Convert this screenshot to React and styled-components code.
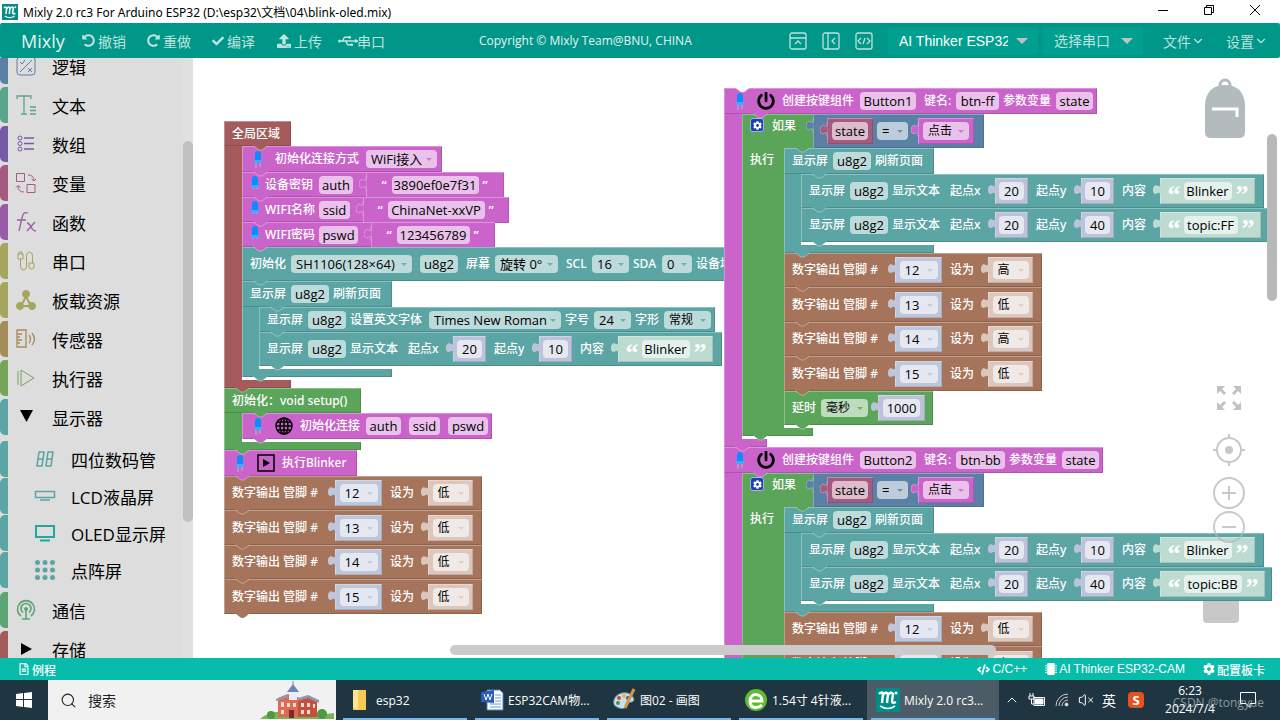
import React from "react";
import styled, { createGlobalStyle } from "styled-components";
import {
  FaCheck,
  FaCog,
  FaMicrochip,
  FaPowerOff,
  FaRedoAlt,
  FaRegFileAlt,
  FaUndoAlt,
  FaUpload,
  FaCode,
} from "react-icons/fa";
import { ChevronDown, ChevronUp, Search, Usb, VolumeX } from "lucide-react";

const MAGENTA = "#ca64ca";
const TEAL = "#5ba5a5";
const BROWN = "#a5745b";
const GREEN = "#5ba55b";
const RED = "#a55b5b";
const BLUE = "#5b80a5";
const ROSE = "#a55b80";
const NUMBER = "#bdc2db";
const PIN = "#bdc6db";
const LEVEL = "#dbc7bd";
const TEXT = "#bddbd1";

const menuItems = [
  { name: "逻辑", color: BLUE, icon: "logic" },
  { name: "文本", color: "#5ba58c", icon: "text" },
  { name: "数组", color: "#745ba5", icon: "list" },
  { name: "变量", color: ROSE, icon: "variable" },
  { name: "函数", color: "#995ba5", icon: "func" },
  { name: "串口", color: "#a5a55b", icon: "serial" },
  { name: "板载资源", color: "#a5a55b", icon: "board" },
  { name: "传感器", color: "#a58c5b", icon: "sensor" },
  { name: "执行器", color: "#74a55b", icon: "actuator" },
  {
    name: "显示器",
    color: TEAL,
    icon: "open",
    items: [
      { name: "四位数码管", color: TEAL, icon: "digits" },
      { name: "LCD液晶屏", color: TEAL, icon: "lcd" },
      { name: "OLED显示屏", color: TEAL, icon: "oled" },
      { name: "点阵屏", color: TEAL, icon: "matrix" },
    ],
  },
  { name: "通信", color: "#5ba574", icon: "radio" },
  { name: "存储", color: RED, icon: "closed" },
];

const tasks = [
  { name: "esp32", icon: "folder" },
  { name: "ESP32CAM物...", icon: "word" },
  { name: "图02 - 画图", icon: "paint" },
  { name: "1.54寸 4针液...", icon: "browser" },
  { name: "Mixly 2.0 rc3...", icon: "mixly", active: true },
];

const MenuIcon = ({ name, color }) => {
  const shapes = {
    logic: (
      <>
        <rect x="1" y="1" width="18" height="18" rx="3" />
        <path d="M4 16 16 4M4 6l2 2 3-4M12 12l4 4M16 12l-4 4" />
      </>
    ),
    text: <path d="M1 4V1h14v3M8 1v18M5 19h6M14 12h6M14 15.500h6M14 19h6" strokeWidth="1.300" />,
    list: (
      <>
        <circle cx="4" cy="4" r="2" />
        <circle cx="4" cy="9.500" r="2" />
        <circle cx="4" cy="15" r="2" />
        <path d="M8 4h10M8 9.500h10M8 15h10" strokeWidth="1.600" />
      </>
    ),
    variable: (
      <path d="M.5.5h8v8h-8zM11 11.500h8v8h-8zM12 2q6 0 6 6M15.500 6l2.500 2 2-2M8 19q-6 0-6-6M0 14.500l2-2 2.500 2" />
    ),
    func: <path d="M12 1Q7-1 6 6L3 19M1 8h9M11 11q2 0 4 4t5 4M19 10 11 19" strokeWidth="1.300" />,
    serial: (
      <path d="M2 3h5v5h-5zM3 3V1h3v2M4.500 8v7q0 4 3 4t3-4V5q0-4 3-4t3 4v7M13 12h5v4q0 2-2.500 2T13 16z" />
    ),
    board: (
      <g fill={color}>
        <circle cx="10" cy="4" r="3.500" />
        <circle cx="4" cy="16" r="3.500" />
        <circle cx="16" cy="16" r="3.500" />
        <path d="M10 4Q9 11 4 16h12Q11 11 10 4" fill="none" strokeWidth="2" />
      </g>
    ),
    sensor: (
      <path d="M1 1h9v17H1zM1 5h5M1 8h3M1 11h5M1 14h3M13 6q3 4 0 8M16 4q5 6 0 12" strokeWidth="1.300" />
    ),
    actuator: <path d="M2 3v14M5 2v16l13-8z" />,
    open: <path d="M4 3h13l-6.500 12z" fill="#000" stroke="none" />,
    closed: <path d="M5 4v12l11-6z" fill="#000" stroke="none" />,
    digits: (
      <>
        <path d="M4 3h5l-2 14H2z" strokeWidth="1.600" strokeLinejoin="round" />
        <path d="M13 3h5l-2 14h-5z" strokeWidth="1.600" strokeLinejoin="round" />
        <path d="M3 10h5M12 10h5" strokeWidth="1.600" />
      </>
    ),
    lcd: (
      <path d="M.5 5.500h19v6H.5zM5 14h10" strokeWidth="1.500" />
    ),
    oled: (
      <path d="M1 3h18v11H1zM5 17.500h10" stroke="#26a5a0" strokeWidth="2" />
    ),
    matrix: (
      <g fill={color} stroke="none">
        {[2.500, 10, 17.500].map((x) =>
          [2.500, 10, 17.500].map((y) => <circle key={`${x}-${y}`} cx={x} cy={y} r="2.500" />)
        )}
      </g>
    ),
    radio: (
      <>
        <path d="M5 16a8.500 8.500 0 1 1 10 0M7 12.500a5 5 0 1 1 6 0M10 9v10M6 19h8" strokeWidth="1.600" />
        <circle cx="10" cy="9" r="1.500" fill={color} />
      </>
    ),
  };

  return (
    <svg width="20" height="20" viewBox="0 0 20 20" fill="none" stroke={color} overflow="visible">
      {shapes[name]}
    </svg>
  );
};

const MixlyLogo = ({ size }) => (
  <svg width={size} height={size} viewBox="0 0 24 24">
    <path d="M0 0h24v24H0z" fill="#008d86" />
    <path
      d="M3 6q3-3 4 0l-1 9M7 7q3-4 5-1l-1 9M12 7q3-4 5-1l-1 7q0 3 4 1"
      fill="none"
      stroke="#fff"
      strokeWidth="2.400"
    />
    <path d="M4 18q8 5 15 0" fill="none" stroke="#fff" strokeWidth="1.600" />
    <circle cx="20" cy="5" r="1.500" fill="#fff" />
  </svg>
);

const TaskIcon = ({ name }) => {
  if (name === "mixly") return <MixlyLogo size={24} />;

  const shapes = {
    folder: (
      <>
        <path d="M5 2h13v20H5z" fill="#f6cb55" />
        <path d="M5 2h5v20l-5-3z" fill="#ffe596" />
      </>
    ),
    word: (
      <>
        <path d="M7 2h13l3 3v17H7z" fill="#fff" stroke="#4a7cc7" />
        <path d="M15 7h6M15 10h6M15 13h6M10 16h11M10 19h11" stroke="#6f98d6" />
        <path d="M1 4 14 2v13L1 14z" fill="#2b5eb2" />
        <path d="m4 6 2 6 2-6 2 6 2-6" fill="none" stroke="#fff" />
      </>
    ),
    paint: (
      <>
        <path d="M2 12C4 4 17 2 21 9s-6 4-6 7-3 6-8 4-6-4-5-8z" fill="#cbe0ee" stroke="#5c87a5" />
        <circle cx="7" cy="10" r="2" fill="#d9463d" />
        <circle cx="12" cy="8" r="2" fill="#efb825" />
        <circle cx="6" cy="15" r="2" fill="#3e9b45" />
        <circle cx="16" cy="10" r="2" fill="#2766b1" />
        <path d="m22 1-9 19" stroke="#d69445" strokeWidth="3" />
      </>
    ),
    browser: (
      <>
        <circle cx="12" cy="12" r="11" fill="#5fbc32" />
        <path d="M6 13h12c0-8-12-9-12 0s9 7 12 4" fill="none" stroke="#fff" strokeWidth="3" />
      </>
    ),
  };
  return (
    <svg width="24" height="24" viewBox="0 0 24 24">
      {shapes[name]}
    </svg>
  );
};

const Led = ({ narrow }) => (
  <LedBox $narrow={narrow}>
    <svg width="10" height={narrow ? 13 : 17} viewBox={narrow ? "0 0 10 13" : "0 0 10 17"}>
      <path d="M3 11v6M7 11v5" stroke="#b5b5d5" />
      <path d="M2 10V4q0-4 3-4t3 4v6z" fill="#0a8bff" />
      <path d="M1 9h8v3H1z" fill="#45a8f5" />
    </svg>
  </LedBox>
);

const Globe = () => (
  <BlockIcon width="18" height="18" viewBox="0 0 18 18" fill="none" stroke="#000" strokeWidth="1.500">
    <circle cx="9" cy="9" r="8" />
    <ellipse cx="9" cy="9" rx="4" ry="8" />
    <path d="M9 1v16M1 9h16M2 5h14M2 13h14" />
  </BlockIcon>
);

const PlayBox = () => (
  <BlockIcon width="18" height="18" viewBox="0 0 18 18">
    <path d="M1 1h16v16H1z" fill="none" stroke="#000" strokeWidth="1.500" />
    <path d="M6 5v8l7-4z" />
  </BlockIcon>
);

const Notch = ({ color, left = 11 }) => (
  <NotchSvg $left={left} width="15" height="6" viewBox="0 0 15 6">
    <path d="M0 0h15v1h-1L9 5H6L1 1H0z" fill={color} />
    <path d="M1 1.500 6 5h3l5-3.500" fill="none" stroke="#fff" strokeOpacity="0.35" />
  </NotchSvg>
);

const Value = ({ color, width, flat, near, children }) => (
  <ValueBox $color={color} $width={width} $near={near}>
    <Puzzle width="8" height="15" viewBox="0 0 8 15">
      <path
        d="M8 1v13H7V11Q5 10 3 12 0 12 0 8T3 3Q5 5 7 4V1z"
        fill={color}
        stroke="#fff"
        strokeOpacity={flat ? 0.3 : 0.1}
      />
    </Puzzle>
    {children}
  </ValueBox>
);

const Input = ({ label, width, value, sep }) => (
  <FieldInput aria-label={label} $width={width} $sep={sep} defaultValue={value} />
);

const Dropdown = ({ label, width, value, color, sep, small }) => (
  <DropdownBox $width={width} $color={color} $sep={sep}>
    <FieldSelect aria-label={label} defaultValue={value} $small={small}>
      <option>{value}</option>
    </FieldSelect>
  </DropdownBox>
);

const CBlock = ({ color, head, arm, armLabel, foot, children }) => (
  <div>
    {head}
    <Body>
      <Arm $color={color} $width={arm}>
        {armLabel}
      </Arm>
      <div>{children}</div>
    </Body>
    <Foot $color={color} $width={foot}>
      <Notch color={color} />
    </Foot>
  </div>
);

const Row = ({ color, height = 25, end = 4, notchLeft, children }) => (
  <RowBox $color={color} $height={height} $end={end}>
    {children}
    <Notch color={color} left={notchLeft} />
  </RowBox>
);

const PinRow = ({ pin, level, index }) => (
  <Row color={BROWN} height={index % 2 ? 35 : 34} end={9}>
    <Label $width={90}>数字输出 管脚 #</Label>
    <Value color={PIN} width={47}>
      <Dropdown label="管脚" width={38} value={pin} color={PIN} />
    </Value>
    <Label $width={25} $sep>
      设为
    </Label>
    <Value color={LEVEL} width={45}>
      <Dropdown label="电平" width={36} value={level} color={LEVEL} small />
    </Value>
  </Row>
);

const StringRow = ({ label, name, nameWidth, value, valueWidth, width }) => (
  <Row color={MAGENTA} end={0}>
    <Led narrow />
    <Label $width={50}>{label}</Label>
    <Input label={label} width={nameWidth} value={name} />
    <Value color={MAGENTA} width={width} flat>
      <SmallQuote>“</SmallQuote>
      <Input label={`${label}值`} width={valueWidth} value={value} />
      <SmallQuote>”</SmallQuote>
    </Value>
  </Row>
);

const TextRow = ({ x, y, text, textWidth, end = 9 }) => (
  <Row color={TEAL} height={34} end={end}>
    <Label $width={37}>显示屏</Label>
    <Input label="显示屏" width={38} value="u8g2" />
    <Label $width={50}>显示文本</Label>
    <Label $width={32} $sep>
      起点x
    </Label>
    <Value color={NUMBER} width={33}>
      <Input label="起点x" width={25} value={x} />
    </Value>
    <Label $width={32} $sep>
      起点y
    </Label>
    <Value color={NUMBER} width={33}>
      <Input label="起点y" width={25} value={y} />
    </Value>
    <Label $width={25} $sep>
      内容
    </Label>
    <Value color={TEXT} width={textWidth + 47}>
      <BigQuote>“</BigQuote>
      <Input label="内容" width={textWidth} value={text} />
      <BigQuote>”</BigQuote>
    </Value>
  </Row>
);

const RefreshBlock = ({ children }) => (
  <CBlock
    color={TEAL}
    arm={17}
    foot={150}
    head={
      <Row color={TEAL} height={26} end={8} notchLeft={28}>
        <Label $width={37}>显示屏</Label>
        <Input label="显示屏" width={38} value="u8g2" />
        <Label $width={51}>刷新页面</Label>
      </Row>
    }
  >
    {children}
  </CBlock>
);

const ButtonBlock = ({ name, id, idWidth, topic, topicWidth, levels }) => (
  <CBlock
    color={MAGENTA}
    arm={18}
    foot={43}
    head={
      <Row color={MAGENTA} height={26} notchLeft={29}>
        <Led />
        <PowerIcon size={18} />
        <Label $width={74}>创建按键组件</Label>
        <Input label="创建按键组件" width={56} value={name} />
        <Label $width={28} $sep>
          键名:
        </Label>
        <Input label="键名" width={idWidth} value={id} />
        <Label $width={49}>参数变量</Label>
        <Input label="参数变量" width={37} value="state" />
      </Row>
    }
  >
    <CBlock
      color={GREEN}
      arm={42}
      armLabel="执行"
      foot={71}
      head={
        <IfRow>
          <GearButton aria-label="如果">
            <FaCog size={9} />
          </GearButton>
          <Label $width={28} $sep>
            如果
          </Label>
          <Compare>
            <Value color={BLUE} width={171} flat>
              <Value color={ROSE} width={46} flat>
                <Input label="变量" width={36} value="state" />
              </Value>
              <Dropdown label="比较" width={31} value="=" color={BLUE} />
              <Value color={MAGENTA} width={56} flat near>
                <Dropdown label="动作" width={46} value="点击" color={MAGENTA} small />
              </Value>
            </Value>
          </Compare>
          <Notch color={GREEN} left={53} />
        </IfRow>
      }
    >
      <RefreshBlock>
        <TextRow x="20" y="10" text="Blinker" textWidth={48} />
        <TextRow x="20" y="40" text={topic} textWidth={topicWidth} end={7} />
      </RefreshBlock>
      {levels.map((level, i) => (
        <PinRow key={i} index={i} pin={String(12 + i)} level={level} />
      ))}
      <Row color={GREEN} height={34} end={8}>
        <Label $width={25}>延时</Label>
        <Dropdown label="延时" width={47} value="毫秒" color={GREEN} small />
        <Value color={NUMBER} width={47} near>
          <Input label="时长" width={37} value="1000" />
        </Value>
      </Row>
    </CBlock>
  </CBlock>
);

const LeftStack = () => (
  <Stack $left={31} $top={63}>
    <CBlock
      color={RED}
      arm={18}
      foot={67}
      head={
        <Row color={RED} end={9} notchLeft={29}>
          <Label $width={50}>全局区域</Label>
        </Row>
      }
    >
      <Row color={MAGENTA} height={26} end={5}>
        <Led />
        <Label $width={87}>初始化连接方式</Label>
        <Dropdown label="初始化连接方式" width={71} value="WiFi接入" color={MAGENTA} />
      </Row>
      <StringRow label="设备密钥" name="auth" nameWidth={34} value="3890ef0e7f31" valueWidth={87} width={138} />
      <StringRow label="WIFI名称" name="ssid" nameWidth={31} value="ChinaNet-xxVP" valueWidth={97} width={146} />
      <StringRow label="WIFI密码" name="pswd" nameWidth={39} value="123456789" valueWidth={73} width={124} />
      <Row color={TEAL} height={34}>
        <Label $width={37}>初始化</Label>
        <Dropdown label="初始化" width={121} value="SH1106(128×64)" color={TEAL} />
        <Input label="名称" width={38} value="u8g2" sep />
        <Label $width={25} $sep>
          屏幕
        </Label>
        <Dropdown label="屏幕" width={63} value="旋转 0°" color={TEAL} />
        <Label $width={22} $sep>
          SCL
        </Label>
        <Dropdown label="SCL" width={37} value="16" color={TEAL} />
        <Label $width={25}>SDA</Label>
        <Dropdown label="SDA" width={30} value="0" color={TEAL} />
        <Label $width={49}>设备地址</Label>
      </Row>
      <RefreshBlock>
        <Row color={TEAL}>
          <Label $width={37}>显示屏</Label>
          <Input label="显示屏" width={38} value="u8g2" />
          <Label $width={75}>设置英文字体</Label>
          <Dropdown label="设置英文字体" width={132} value="Times New Roman" color={TEAL} />
          <Label $width={25}>字号</Label>
          <Dropdown label="字号" width={37} value="24" color={TEAL} />
          <Label $width={25}>字形</Label>
          <Dropdown label="字形" width={47} value="常规" color={TEAL} small />
        </Row>
        <TextRow x="20" y="10" text="Blinker" textWidth={48} />
      </RefreshBlock>
    </CBlock>
    <CBlock
      color={GREEN}
      arm={18}
      foot={137}
      head={
        <Row color={GREEN} end={9} notchLeft={29}>
          <Label $width={120}>初始化：void setup()</Label>
        </Row>
      }
    >
      <Row color={MAGENTA} height={26}>
        <Led />
        <Globe />
        <Label $width={62}>初始化连接</Label>
        <Input label="auth" width={35} value="auth" />
        <Input label="ssid" width={31} value="ssid" sep />
        <Input label="pswd" width={40} value="pswd" sep />
      </Row>
    </CBlock>
    <Row color={MAGENTA} height={26} end={8}>
      <Led />
      <PlayBox />
      <Label $width={67}>执行Blinker</Label>
    </Row>
    {[12, 13, 14, 15].map((pin, i) => (
      <PinRow key={pin} index={i} pin={String(pin)} level="低" />
    ))}
  </Stack>
);

const Sidebar = () => (
  <Aside>
    <Menu>
      {menuItems.map((item) => (
        <React.Fragment key={item.name}>
          <MenuRow $color={item.color}>
            <MenuIcon name={item.icon} color={item.color} />
            <span>{item.name}</span>
          </MenuRow>
          {item.items && (
            <SubMenu>
              {item.items.map((sub) => (
                <MenuRow key={sub.name} $color={sub.color} $sub>
                  <MenuIcon name={sub.icon} color={sub.color} />
                  <span>{sub.name}</span>
                </MenuRow>
              ))}
            </SubMenu>
          )}
        </React.Fragment>
      ))}
    </Menu>
    <SideTrack>
      <SideThumb />
    </SideTrack>
  </Aside>
);

const Controls = () => (
  <>
    <Backpack width="40" height="60" viewBox="0 0 40 60">
      <circle cx="20" cy="7" r="5" fill="none" stroke="#b4bbbf" strokeWidth="3" />
      <path d="M0 26Q2 7 20 7t20 19v28q0 6-6 6H6q-6 0-6-6z" fill="#b4bbbf" />
      <path d="M7 31h25v8" fill="none" stroke="#fff" strokeWidth="3" />
    </Backpack>
    <ControlList>
      <ControlButton aria-label="全屏" $size={26} $space={23}>
        <svg width="26" height="26" viewBox="0 0 26 26" fill="#bcc2c5">
          <path d="M1 1h8L6 4l4 4-2 2-4-4-3 3zM25 1v8l-3-3-4 4-2-2 4-4-3-3zM1 25v-8l3 3 4-4 2 2-4 4 3 3zM25 25h-8l3-3-4-4 2-2 4 4 3-3z" />
        </svg>
      </ControlButton>
      <ControlButton aria-label="居中" $size={32} $space={11}>
        <svg width="32" height="32" viewBox="0 0 32 32" fill="none" stroke="#c8c8c8" strokeWidth="2">
          <circle cx="16" cy="16" r="12" />
          <circle cx="16" cy="16" r="4" fill="#c8c8c8" stroke="none" />
          <path d="M16 0v4M16 28v4M0 16h4M28 16h4" />
        </svg>
      </ControlButton>
      <ControlButton aria-label="放大" $size={32} $space={2}>
        <svg width="32" height="32" viewBox="0 0 32 32" fill="none" stroke="#c8c8c8" strokeWidth="2">
          <circle cx="16" cy="16" r="15" />
          <path d="M9 16h14M16 9v14" />
        </svg>
      </ControlButton>
      <ControlButton aria-label="缩小" $size={32} $space={0}>
        <svg width="32" height="32" viewBox="0 0 32 32" fill="none" stroke="#b4b4b4" strokeOpacity="0.7" strokeWidth="2">
          <circle cx="16" cy="16" r="15" />
          <path d="M9 16h14" />
        </svg>
      </ControlButton>
    </ControlList>
    <VerticalThumb />
    <HorizontalThumb />
  </>
);

const PanelIcon = ({ d }) => (
  <svg width="18" height="18" viewBox="0 0 18 18" fill="none" stroke="currentColor" strokeWidth="1.300">
    <rect x="1" y="1" width="16" height="16" rx="2" />
    <path d={d} />
  </svg>
);

const Schoolhouse = () => (
  <svg width="78" height="38" viewBox="0 0 78 38">
    <path d="M2 38q12-10 28-6t46 0v6z" fill="#79b352" />
    <path d="M20 17l10-4 12 4v19H20z" fill="#dd6a55" />
    <path d="M40 18l10-3 9 5v16H40z" fill="#c64f3e" />
    <path d="M31 10h8v9h-8z" fill="#e9ecf4" />
    <path d="M29 11l6-8 6 8z" fill="#6f83b6" />
    <path d="M35 0v5" stroke="#7f8fb8" />
    <path d="M18 18l12-5v3l-12 4zM40 17l10-3 11 5v3l-11-5-10 3z" fill="#8c98b5" />
    <path d="M23 21h3v5h-3zM29 22h3v4h-3zM35 22h3v4h-3zM43 22h3v4h-3zM49 22h3v4h-3zM55 23h2v4h-2zM23 29h3v4h-3zM43 29h3v4h-3zM49 29h3v4h-3z" fill="#f4dfd5" />
    <path d="M31 29h5v8h-5z" fill="#7a2b25" />
    <circle cx="13" cy="34" r="4" fill="#4d9a42" />
    <circle cx="64" cy="33" r="5" fill="#4d9a42" />
  </svg>
);

export default function App() {
  return (
    <Page>
      <GlobalStyle />

      <TitleBar>
        <MixlyLogo size={16} />
        <Title>Mixly 2.0 rc3 For Arduino ESP32 (D:\esp32\文档\04\blink-oled.mix)</Title>
        <WindowButton aria-label="最小化">
          <svg width="12" height="12" stroke="#000">
            <path d="M1 6.500h10" />
          </svg>
        </WindowButton>
        <WindowButton aria-label="还原">
          <svg width="12" height="12" fill="none" stroke="#000">
            <path d="M1.500 3.500h7v7h-7zM3.500 3V1.500h7v7H9" />
          </svg>
        </WindowButton>
        <WindowButton aria-label="关闭">
          <svg width="12" height="12" stroke="#000">
            <path d="M1 1l10 10M11 1 1 11" />
          </svg>
        </WindowButton>
      </TitleBar>

      <Toolbar>
        <Brand>Mixly</Brand>
        <ToolButton>
          <FaUndoAlt size={13} />
          撤销
        </ToolButton>
        <ToolButton>
          <FaRedoAlt size={13} />
          重做
        </ToolButton>
        <ToolButton>
          <FaCheck size={12} />
          编译
        </ToolButton>
        <ToolButton>
          <FaUpload size={14} />
          上传
        </ToolButton>
        <ToolButton $tight>
          <UsbIcon size={18} />
          串口
        </ToolButton>
        <Copyright>Copyright © Mixly Team@BNU, CHINA</Copyright>
        <PanelButton aria-label="顶部面板">
          <PanelIcon d="M1 6h16M6 12l3-3 3 3" />
        </PanelButton>
        <PanelButton aria-label="侧边面板">
          <PanelIcon d="M6 1v16M13 6l-3 3 3 3" />
        </PanelButton>
        <PanelButton aria-label="代码">
          <PanelIcon d="M6 6 3 9l3 3M12 6l3 3-3 3M10 6l-2 6" />
        </PanelButton>
        <ToolSelectBox $width={150} $solid>
          <select aria-label="板卡" defaultValue="AI Thinker ESP32-CAM">
            <option>AI Thinker ESP32-CAM</option>
          </select>
        </ToolSelectBox>
        <ToolSelectBox $width={100}>
          <select aria-label="串口" defaultValue="选择串口">
            <option>选择串口</option>
          </select>
        </ToolSelectBox>
        <MenuButton>
          文件
          <ChevronDown size={14} strokeWidth={2} />
        </MenuButton>
        <MenuButton>
          设置
          <ChevronDown size={14} strokeWidth={2} />
        </MenuButton>
      </Toolbar>

      <Main>
        <Sidebar />
        <Workspace>
          <Trash />
          <LeftStack />
          <Stack $left={531} $top={30}>
            <TopNotch>
              <Notch color="#fff" />
            </TopNotch>
            <ButtonBlock
              name="Button1"
              id="btn-ff"
              idWidth={43}
              topic="topic:FF"
              topicWidth={54}
              levels={["高", "低", "高", "低"]}
            />
            <ButtonBlock
              name="Button2"
              id="btn-bb"
              idWidth={49}
              topic="topic:BB"
              topicWidth={58}
              levels={["低", "高", "低", "高"]}
            />
          </Stack>
          <Controls />
        </Workspace>
      </Main>

      <StatusBar>
        <StatusLink href="#examples" $first>
          <FaRegFileAlt size={12} />
          例程
        </StatusLink>
        <StatusLink href="#code">
          <FaCode size={13} />
          C/C++
        </StatusLink>
        <StatusLink href="#board">
          <FaMicrochip size={12} />
          AI Thinker ESP32-CAM
        </StatusLink>
        <StatusLink href="#config">
          <FaCog size={12} />
          配置板卡
        </StatusLink>
      </StatusBar>

      <Taskbar>
        <StartButton aria-label="开始">
          <svg width="16" height="16" fill="#fff">
            <path d="M0 2l7-1v6H0zM8 1l8-1v7H8zM0 8h7v7l-7-1zM8 8h8v8l-8-1z" />
          </svg>
        </StartButton>
        <SearchBox>
          <Search size={17} strokeWidth={1.5} color="#222" />
          <input aria-label="搜索" placeholder="搜索" />
          <Schoolhouse />
        </SearchBox>
        <Tasks>
          {tasks.map((task) => (
            <Task key={task.name} $active={task.active}>
              <TaskIcon name={task.icon} />
              {task.name}
            </Task>
          ))}
        </Tasks>
        <Tray>
          <ChevronUp size={16} strokeWidth={1.5} />
          <svg width="18" height="16" fill="none" stroke="#fff">
            <path d="M6 5.500h10.500v8H6zM2 1v3M5 1v3M1 4h5v3H1zM3.500 7v5H6" />
            <path d="M7 7h8v5H7z" fill="#fff" />
          </svg>
          <svg width="16" height="16" fill="none" stroke="#ccc">
            <path d="M2 14A12 12 0 0 1 14 2M5 14a9 9 0 0 1 9-9M8 14a6 6 0 0 1 6-6" />
            <circle cx="12.500" cy="12.500" r="1.500" fill="#fff" />
          </svg>
          <VolumeX size={16} strokeWidth={1.5} />
          <span>英</span>
          <Sogou>S</Sogou>
        </Tray>
        <Clock>
          <span>6:23</span>
          <span>2024/7/4</span>
        </Clock>
        <Notice width="16" height="18" fill="none" stroke="#fff">
          <path d="M.5 1.500h15v11H10v4l-4-4H.5z" />
        </Notice>
        <Watermark>CSDN @tongyue</Watermark>
      </Taskbar>
    </Page>
  );
}

const GlobalStyle = createGlobalStyle`
  * {
    box-sizing: border-box;
  }

  body {
    margin: 0;
    overflow: hidden;
    font-family: "Open Sans", "Noto Sans CJK SC", sans-serif;
    font-size: 12px;
  }

  button, input, select {
    margin: 0;
    padding: 0;
    border: 0;
    outline: 0;
    background: none;
    color: inherit;
    font: inherit;
  }

  svg {
    flex-shrink: 0;
  }
`;

const Page = styled.div`
  display: flex;
  flex-direction: column;
  height: 100vh;
  background: #fff;
`;

const TitleBar = styled.header`
  display: flex;
  align-items: center;
  flex-shrink: 0;
  height: 23px;
  padding: 0 2px;
`;

const Title = styled.div`
  flex: 1;
  padding-left: 5px;
  color: #000;
  font-family: "Noto Sans", "Noto Sans CJK SC", sans-serif;
`;

const WindowButton = styled.button`
  width: 46px;
  height: 21px;
`;

const Toolbar = styled.nav`
  display: flex;
  align-items: center;
  flex-shrink: 0;
  height: 35px;
  padding: 0 11px 0 21px;
  border-radius: 2px;
  background: #009688;
  color: #bce3df;
  font-size: 14px;
`;

const Brand = styled.div`
  width: 61px;
  color: #e4f5f3;
  font-size: 18px;
`;

const ToolButton = styled.button`
  display: flex;
  align-items: center;
  gap: ${({ $tight }) => ($tight ? 0 : 3)}px;
  width: 65px;
  margin-left: ${({ $tight }) => ($tight ? -3 : 0)}px;
  white-space: nowrap;
`;

const UsbIcon = styled(Usb)`
  transform: rotate(45deg);
`;

const Copyright = styled.div`
  flex: 1;
  padding-left: 75px;
  color: #e4f5f3;
  font-size: 12px;
`;

const PanelButton = styled.button`
  display: flex;
  justify-content: center;
  width: 33px;
`;

const ToolSelectBox = styled.div`
  position: relative;
  width: ${({ $width }) => $width}px;
  height: 28px;
  margin-left: ${({ $solid }) => ($solid ? 8 : 5)}px;
  border-radius: 2px;
  background: #009f90;
  color: ${({ $solid }) => ($solid ? "#fff" : "#bce3df")};

  & select {
    width: 100%;
    height: 28px;
    padding: 0 30px 0 11px;
    appearance: none;
    font-family: "Liberation Sans", "Noto Sans CJK SC", sans-serif;
    font-size: 14px;
  }

  &::after {
    content: "";
    position: absolute;
    top: 11px;
    right: 10px;
    border: 6px solid transparent;
    border-top-color: #c2c2c2;
    border-bottom: 0;
    pointer-events: none;
  }
`;

const MenuButton = styled.button`
  display: flex;
  align-items: center;
  width: 43px;
  margin-left: 20px;
  white-space: nowrap;
`;

const Main = styled.main`
  display: flex;
  flex: 1;
  min-height: 0;
`;

const Aside = styled.aside`
  display: flex;
  width: 193px;
  overflow: hidden;
  background: #ddd;
`;

const Menu = styled.div`
  flex: 1;
  margin-top: -10px;
`;

const MenuRow = styled.div`
  display: flex;
  align-items: center;
  gap: 16px;
  height: 36px;
  margin-bottom: ${({ $sub }) => ($sub ? 1 : 3)}px;
  padding-left: ${({ $sub }) => ($sub ? 27 : 8)}px;
  border-left: 8px solid ${({ $color }) => $color};
  border-radius: 5px 0 0 5px;
  color: #000;
  font-size: 17px;
  white-space: nowrap;
`;

const SubMenu = styled.div`
  padding: 3px 0;
`;

const SideTrack = styled.div`
  width: 10px;
  padding-top: 83px;
  background: #e1e0e0;
`;

const SideThumb = styled.div`
  height: 381px;
  border-radius: 5px;
  background: #c1bfc0;
`;

const Workspace = styled.section`
  position: relative;
  flex: 1;
  overflow: hidden;
  background: #fff;
`;

const Stack = styled.div`
  position: absolute;
  top: ${({ $top }) => $top}px;
  left: ${({ $left }) => $left}px;
`;

const RowBox = styled.div`
  position: relative;
  display: flex;
  align-items: center;
  gap: 4px;
  width: max-content;
  height: ${({ $height }) => $height}px;
  padding: 0 ${({ $end }) => $end}px 0 8px;
  background: ${({ $color }) => $color};
  box-shadow: inset 1px 1px 0 rgba(255, 255, 255, 0.3), inset -1px -1px 0 rgba(0, 0, 0, 0.15);
`;

const NotchSvg = styled.svg`
  position: absolute;
  z-index: 1;
  top: calc(100% - 1px);
  left: ${({ $left }) => $left}px;
`;

const TopNotch = styled.div`
  position: absolute;
  z-index: 1;
  top: 0;
`;

const Body = styled.div`
  display: flex;
  padding-bottom: 3px;
`;

const Arm = styled.div`
  width: ${({ $width }) => $width}px;
  margin-bottom: -3px;
  padding: 2px 0 0 8px;
  background: ${({ $color }) => $color};
  box-shadow: inset 1px 0 0 rgba(255, 255, 255, 0.3);
  color: #fff;
  font-weight: 500;
  line-height: 20px;
`;

const Foot = styled.div`
  position: relative;
  width: ${({ $width }) => $width}px;
  height: 8px;
  background: ${({ $color }) => $color};
  box-shadow: inset 1px 0 0 rgba(255, 255, 255, 0.3), inset -1px -1px 0 rgba(0, 0, 0, 0.15);
`;

const Label = styled.span`
  width: ${({ $width }) => $width}px;
  margin-left: ${({ $sep }) => ($sep ? 4 : 0)}px;
  color: #fff;
  font-family: "Noto Sans", "Noto Sans CJK SC", sans-serif;
  font-weight: 500;
  line-height: 18px;
  white-space: nowrap;
`;

const FieldInput = styled.input`
  width: ${({ $width }) => $width}px;
  height: 18px;
  margin-left: ${({ $sep }) => ($sep ? 4 : 0)}px;
  border-radius: 4px;
  background: rgba(255, 255, 255, 0.6);
  color: #000;
  font-size: 13px;
  text-align: center;
`;

const DropdownBox = styled.div`
  position: relative;
  width: ${({ $width }) => $width}px;
  height: 18px;
  margin-left: ${({ $sep }) => ($sep ? 4 : 0)}px;
  border-radius: 4px;
  background: rgba(255, 255, 255, 0.6);

  &::after {
    content: "";
    position: absolute;
    top: 8px;
    right: 5px;
    border: 3px solid transparent;
    border-top-color: ${({ $color }) => $color};
    border-bottom: 0;
    opacity: 0.8;
    pointer-events: none;
  }
`;

const FieldSelect = styled.select`
  display: block;
  width: 100%;
  height: 18px;
  padding-left: 5px;
  appearance: none;
  color: #000;
  font-size: ${({ $small }) => ($small ? 12 : 13)}px;
  line-height: 18px;
`;

const ValueBox = styled.div`
  position: relative;
  display: flex;
  align-items: center;
  justify-content: center;
  gap: 4px;
  width: ${({ $width }) => $width}px;
  height: 26px;
  margin-left: ${({ $near }) => ($near ? 6 : 9)}px;
  background: ${({ $color }) => $color};
  box-shadow: inset 1px 1px 0 rgba(255, 255, 255, 0.3), inset -1px -1px 0 rgba(0, 0, 0, 0.12);
`;

const Puzzle = styled.svg`
  position: absolute;
  top: 4px;
  left: -7px;
`;

const SmallQuote = styled.span`
  width: 6px;
  color: #fff;
  font-size: 13px;
  font-weight: 600;
`;

const BigQuote = styled.span`
  width: 12px;
  height: 24px;
  color: #fff;
  font: bold 26px/32px "Liberation Serif", serif;
`;

const IfRow = styled.div`
  position: relative;
  display: flex;
  gap: 4px;
  width: 71px;
  height: 34px;
  padding: 3px 0 0 8px;
  background: ${GREEN};
  box-shadow: inset 1px 1px 0 rgba(255, 255, 255, 0.3);

  & > span {
    flex-shrink: 0;
  }
`;

const Compare = styled.div`
  margin-top: -3px;

  & > div {
    justify-content: flex-start;
    height: 34px;
    padding-left: 5px;
  }
`;

const GearButton = styled.button`
  display: flex;
  align-items: center;
  justify-content: center;
  flex-shrink: 0;
  width: 14px;
  height: 14px;
  margin-top: 1px;
  border: 1px solid #9db5e8;
  border-radius: 3px;
  background: #1f3fae;
  color: #fff;
`;

const LedBox = styled.span`
  display: flex;
  align-self: ${({ $narrow }) => ($narrow ? "flex-start" : "center")};
  width: ${({ $narrow }) => ($narrow ? 11 : 21)}px;
  padding: ${({ $narrow }) => ($narrow ? "4px 0 0 0" : "0 0 0 3px")};
`;

const BlockIcon = styled.svg`
  margin-right: 3px;
`;

const PowerIcon = styled(FaPowerOff)`
  margin-right: 3px;
  color: #000;
`;

const Trash = styled.div`
  position: absolute;
  top: 535px;
  right: 41px;
  width: 36px;
  height: 30px;
  border-radius: 4px;
  background: #c8c8c8;
`;

const Backpack = styled.svg`
  position: absolute;
  top: 20px;
  right: 35px;
`;

const ControlList = styled.div`
  position: absolute;
  z-index: 2;
  top: 327px;
  right: 35px;
  display: flex;
  flex-direction: column;
  align-items: center;
`;

const ControlButton = styled.button`
  display: block;
  height: ${({ $size }) => $size}px;
  margin-bottom: ${({ $space }) => $space}px;
`;

const VerticalThumb = styled.div`
  position: absolute;
  z-index: 2;
  top: 76px;
  right: 3px;
  width: 10px;
  height: 167px;
  border-radius: 5px;
  background: #b9b9b9;
`;

const HorizontalThumb = styled.div`
  position: absolute;
  z-index: 2;
  bottom: 3px;
  left: 257px;
  width: 546px;
  height: 10px;
  border-radius: 5px;
  background: #cbcbcb;
`;

const StatusBar = styled.footer`
  display: flex;
  align-items: center;
  gap: 18px;
  flex-shrink: 0;
  height: 22px;
  padding: 0 15px 0 18px;
  background: #08bcab;
`;

const StatusLink = styled.a`
  display: flex;
  align-items: center;
  gap: 2px;
  margin-right: ${({ $first }) => ($first ? "auto" : 0)};
  color: #fff;
  font-family: "Liberation Sans", "Noto Sans CJK SC", sans-serif;
  font-weight: 500;
  text-decoration: none;
`;

const Taskbar = styled.footer`
  position: relative;
  display: flex;
  align-items: center;
  flex-shrink: 0;
  height: 40px;
  background: #1f3541;
  color: #fff;
`;

const StartButton = styled.button`
  display: flex;
  align-items: center;
  justify-content: center;
  width: 48px;
  height: 40px;
`;

const SearchBox = styled.label`
  display: flex;
  align-items: center;
  gap: 11px;
  width: 288px;
  height: 40px;
  padding-left: 12px;
  background: #f1f1f1;
  color: #222;

  & input {
    flex: 1;
    min-width: 0;
    font-size: 14px;
  }

  & input::placeholder {
    color: #222;
  }
`;

const Tasks = styled.div`
  display: flex;
  flex: 1;
  padding-left: 3px;
`;

const Task = styled.button`
  display: flex;
  align-items: center;
  gap: 4px;
  width: 132px;
  height: 40px;
  padding-left: 5px;
  border: solid transparent;
  border-width: 0 4px;
  background: ${({ $active }) => ($active ? "#4b5c67" : "none")};
  box-shadow: inset 0 -2px 0 #76b9ed;
  white-space: nowrap;
`;

const Tray = styled.div`
  display: flex;
  align-items: center;
  gap: 8px;
  font-size: 14px;
`;

const Sogou = styled.span`
  width: 16px;
  height: 16px;
  margin-left: 4px;
  border-radius: 4px;
  background: #e8501f;
  font-size: 13px;
  font-weight: 700;
  line-height: 16px;
  text-align: center;
`;

const Clock = styled.div`
  display: flex;
  flex-direction: column;
  align-items: center;
  width: 92px;
  line-height: 18px;
`;

const Notice = styled.svg`
  margin: 0 24px 0 4px;
`;

const Watermark = styled.div`
  position: absolute;
  top: 14px;
  right: 16px;
  color: rgba(220, 220, 220, 0.6);
`;
